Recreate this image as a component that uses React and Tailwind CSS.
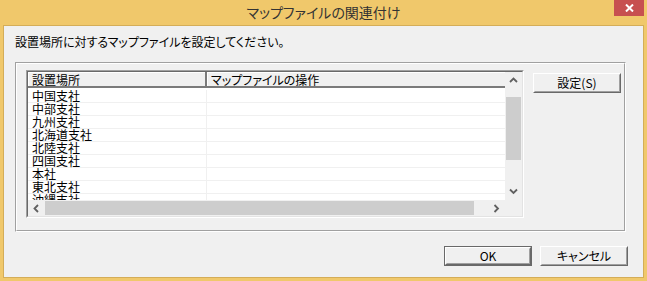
import React from "react";

const rows = ["中国支社", "中部支社", "九州支社", "北海道支社", "北陸支社", "四国支社", "本社", "東北支社", "沖縄支社"];

function Chevron({ dir }) {
  const paths = {
    up: "M1 5 L4.5 1.5 L8 5",
    down: "M1 1.5 L4.5 5 L8 1.5",
    left: "M5 1 L1.5 4.5 L5 8",
    right: "M1.5 1 L5 4.5 L1.5 8",
  };
  const vertical = dir === "up" || dir === "down";
  return (
    <svg width={vertical ? 9 : 7} height={vertical ? 7 : 9} viewBox={vertical ? "0 0 9 7" : "0 0 7 9"}>
      <path d={paths[dir]} fill="none" stroke="#606060" strokeWidth="1.8" />
    </svg>
  );
}

function Btn({ children, def }) {
  const inner = (
    <div className="w-full h-full bg-[#f0f0f0] border border-t-white border-l-white border-b-[#696969] border-r-[#696969] flex">
      <div className="flex-1 border border-t-[#f0f0f0] border-l-[#f0f0f0] border-b-[#a0a0a0] border-r-[#a0a0a0] flex items-center justify-center text-[12px] leading-none text-black">
        {children}
      </div>
    </div>
  );
  return (
    <div className={"w-[88px] h-[20px] flex " + (def ? "border border-[#696969]" : "")}>{inner}</div>
  );
}

export default function App() {
  return (
    <div className="w-[647px] h-[281px] bg-[#f0c86b] flex flex-col overflow-hidden font-['Noto_Sans_CJK_JP','Noto_Sans',sans-serif] [font-feature-settings:'palt']">
      {/* title bar */}
      <div className="h-[25px] relative flex items-center justify-center">
        <span className="text-[14px] leading-none text-[#333333] -mt-[2px]">マップファイルの関連付け</span>
        <div className="absolute top-0 right-[3px] w-[30px] h-[16px] bg-[#c75050] flex items-center justify-center">
          <svg width="9" height="8" viewBox="0 0 9 8">
            <path d="M1 0.5 L8 7.5 M8 0.5 L1 7.5" stroke="#fff" strokeWidth="2" />
          </svg>
        </div>
      </div>

      {/* client */}
      <div className="flex-1 mx-[3px] mb-[3px] bg-[#f0f0f0] border border-[#d4ad58] flex flex-col pl-[11px] pr-[15px] pt-[8px]">
        <div className="text-[12px] leading-[16px] text-black">設置場所に対するマップファイルを設定してください。</div>

        {/* group box */}
        <div className="mt-[12px] w-[611px] h-[170px] border border-t-[#a0a0a0] border-l-[#a0a0a0] border-b-white border-r-white">
          <div className="w-full h-full border border-t-white border-l-white border-b-[#a0a0a0] border-r-[#a0a0a0] flex items-start pl-[9px] pt-[6px]">
            {/* listbox */}
            <div className="w-[498px] h-[148px] border border-t-[#a0a0a0] border-l-[#a0a0a0] border-b-white border-r-white">
              <div className="w-full h-full border border-t-[#696969] border-l-[#696969] border-b-[#e3e3e3] border-r-[#e3e3e3] flex">
                <div className="flex-1 flex flex-col min-w-0">
                  {/* header */}
                  <div className="h-[16px] flex text-[12px] leading-[13px] text-black">
                    <div className="w-[179px] bg-[#f0f0f0] border-b-2 border-r-2 border-b-[#7a7a7a] border-r-[#7a7a7a] shadow-[inset_1px_1px_0_#ffffff] pl-[4px] pt-[1px] whitespace-nowrap">設置場所</div>
                    <div className="flex-1 bg-[#f0f0f0] border-b-2 border-b-[#7a7a7a] shadow-[inset_1px_1px_0_#ffffff] pl-[4px] pt-[1px] whitespace-nowrap">マップファイルの操作</div>
                  </div>
                  {/* rows */}
                  <div className="flex-1 bg-white pt-[2px] overflow-hidden">
                    {rows.map((r) => (
                      <div key={r} className="h-[13px] flex border-b border-[#f0f0f0] text-[12px] leading-[12px] text-black">
                        <div className="w-[179px] border-r border-[#f0f0f0] whitespace-nowrap pl-[4px]">{r}</div>
                        <div className="flex-1" />
                      </div>
                    ))}
                  </div>
                  {/* horizontal scrollbar */}
                  <div className="h-[16px] flex bg-[#f0f0f0]">
                    <div className="w-[17px] flex items-center justify-center"><Chevron dir="left" /></div>
                    <div className="w-[429px] bg-[#cdcdcd] my-[1px]" />
                    <div className="flex-1" />
                    <div className="w-[17px] flex items-center justify-center"><Chevron dir="right" /></div>
                  </div>
                </div>
                {/* vertical scrollbar */}
                <div className="w-[17px] flex flex-col bg-[#f0f0f0]">
                  <div className="h-[17px] flex items-center justify-center"><Chevron dir="up" /></div>
                  <div className="flex-1 pt-[8px] px-[1px]">
                    <div className="h-[63px] bg-[#cdcdcd]" />
                  </div>
                  <div className="h-[17px] flex items-center justify-center"><Chevron dir="down" /></div>
                  <div className="h-[16px]" />
                </div>
              </div>
            </div>
            <div className="ml-[9px] mt-[3px]">
              <Btn>設定(S)</Btn>
            </div>
          </div>
        </div>

        {/* bottom buttons */}
        <div className="mt-[14px] flex justify-end gap-[8px]">
          <Btn def>OK</Btn>
          <Btn>キャンセル</Btn>
        </div>
      </div>
    </div>
  );
}
